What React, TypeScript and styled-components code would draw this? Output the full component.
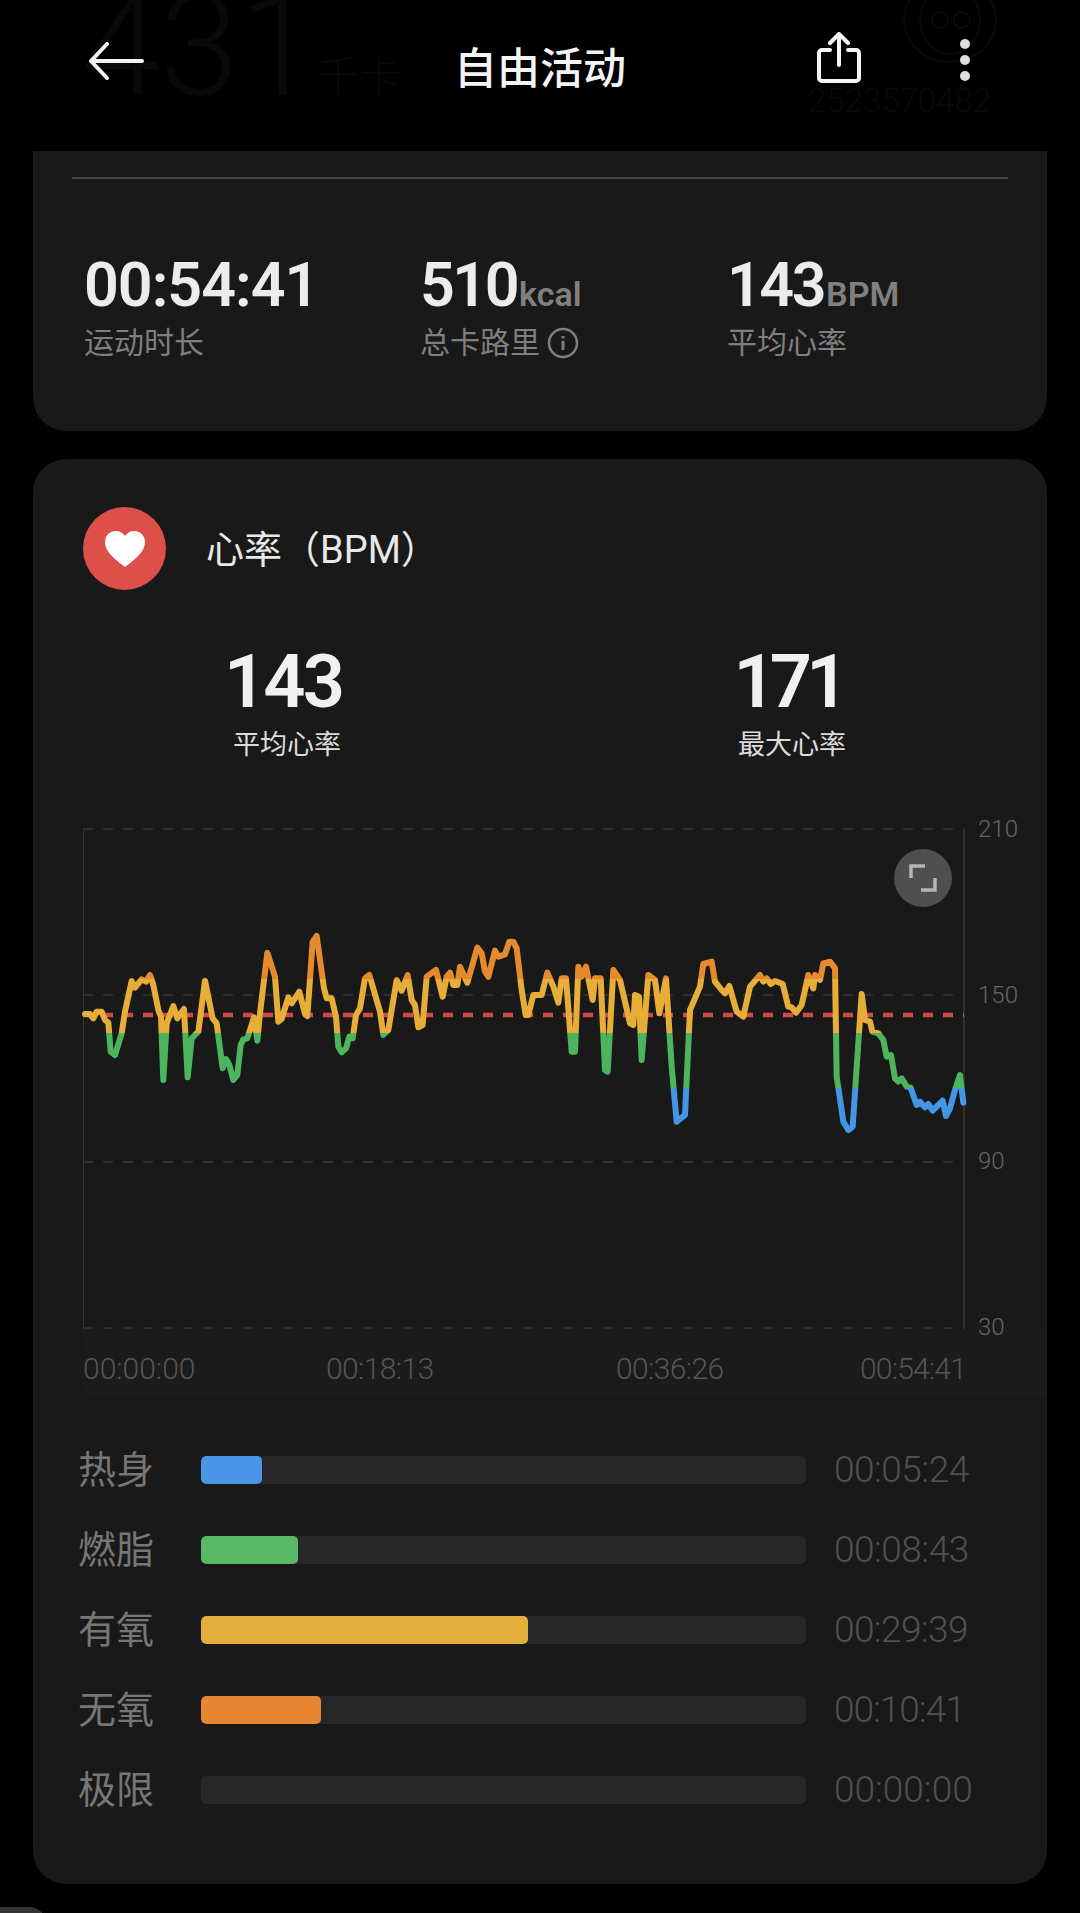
import { createGlobalStyle, styled } from "styled-components";

const GlobalStyle = createGlobalStyle`
	html, body {
		margin: 0;
		padding: 0;
		background: #000;
	}

	body {
		font-family: Roboto, "Noto Sans CJK SC", sans-serif;
	}
`;

const Page = styled.div`
	position: relative;
	width: 1080px;
	height: 1913px;
	overflow: hidden;
	background: #000;
`;

const Header = styled.header`
	position: relative;
	height: 151px;
	box-sizing: border-box;
	display: grid;
	grid-template-columns: 1fr auto 1fr;
	align-items: start;
`;

const Ghost = styled.span<{ $left: number; $top: number; $size: number }>`
	position: absolute;
	left: ${(p) => p.$left}px;
	top: ${(p) => p.$top}px;
	font-size: ${(p) => p.$size}px;
	font-weight: 300;
	line-height: 1;
	color: #090909;
`;

const GhostLogo = styled.svg`
	position: absolute;
	left: 900px;
	top: -10px;
`;

const BackButton = styled.div`
	position: relative;
	padding: 42px 0 0 88px;
	svg {
		display: block;
	}
`;

const HeaderActions = styled.div`
	position: relative;
	display: flex;
	justify-content: flex-end;
	gap: 98px;
	padding-right: 109px;
`;

const ShareButton = styled.div`
	padding-top: 32px;
	svg {
		display: block;
	}
`;

const MoreButton = styled.div`
	padding-top: 38px;
	svg {
		display: block;
	}
`;

const Title = styled.h1`
	position: relative;
	margin: 47px 0 0;
	font-size: 43px;
	font-weight: 500;
	line-height: 44px;
	color: #f4f4f4;
`;

const Card = styled.section<{ $flatTop?: boolean }>`
	margin: 0 33px;
	background: #191919;
	border-radius: ${(p) => (p.$flatTop ? "0 0 33px 33px" : "33px")};
`;

const SummaryCard = styled(Card)`
	height: 280px;
	padding: 26px 39px 0;
	box-sizing: border-box;
`;

const Divider = styled.hr`
	margin: 0;
	border: 0;
	height: 2px;
	background: #444;
`;

const SummaryRow = styled.div`
	display: grid;
	grid-template-columns: 336px 307px auto;
	margin: 80px 0 0 12px;
`;

const SummaryValue = styled.div<{ $spacing: number }>`
	display: flex;
	align-items: baseline;
	height: 52px;
	font-size: 61px;
	font-weight: 600;
	line-height: 52px;
	letter-spacing: ${(p) => p.$spacing}px;
	color: #ececec;
`;

const Unit = styled.span`
	margin-left: 2px;
	font-size: 34px;
	font-weight: 600;
	letter-spacing: 0;
	color: #808080;
`;

const SummaryLabel = styled.div`
	display: flex;
	align-items: center;
	gap: 7px;
	height: 34px;
	margin-top: 15px;
	font-size: 30px;
	line-height: 34px;
	color: #7f7f7f;
`;

const HeartCard = styled(Card)`
	margin-top: 28px;
	height: 1425px;
	padding: 48px 0 0 50px;
	box-sizing: border-box;
`;

const HeartHeader = styled.div`
	display: flex;
	align-items: center;
	gap: 40px;
`;

const HeartBadge = styled.div`
	width: 83px;
	height: 83px;
	border-radius: 50%;
	background: #dd4f49;
	display: flex;
	align-items: center;
	justify-content: center;
`;

const HeartTitle = styled.h2`
	margin: 0 0 4px;
	font-size: 38px;
	font-weight: 400;
	color: #e8e8e8;
`;

const HeartStats = styled.div`
	display: grid;
	grid-template-columns: 400px 400px;
	column-gap: 105px;
	margin-top: 58px;
`;

const HeartStat = styled.div`
	text-align: center;
`;

const HeartValue = styled.div<{ $spacing: number }>`
	font-size: 74px;
	font-weight: 600;
	line-height: 68px;
	letter-spacing: ${(p) => p.$spacing}px;
	color: #f0f0f0;
`;

const HeartLabel = styled.div`
	margin-top: 12px;
	padding-left: 8px;
	font-size: 27px;
	line-height: 34px;
	color: #dcdcdc;
`;

const ChartRow = styled.div`
	position: relative;
	display: flex;
	height: 506px;
	margin-top: 61px;
`;

const ChartSvg = styled.svg`
	display: block;
	overflow: visible;
`;

const YAxis = styled.div`
	display: flex;
	flex-direction: column;
	justify-content: space-between;
	height: 526px;
	margin: -8px 0 0 14px;
`;

const YTick = styled.span`
	font-size: 24px;
	font-weight: 300;
	line-height: 28px;
	color: #666;
`;

const ExpandButton = styled.div`
	position: absolute;
	left: 811px;
	top: 26px;
	width: 58px;
	height: 58px;
	border-radius: 50%;
	background: #4f4f4f;
	display: flex;
	align-items: center;
	justify-content: center;
`;

const XAxis = styled.div`
	display: grid;
	grid-template-columns: 243px 290px 244px auto;
	align-items: center;
	height: 66px;
	padding-top: 12px;
	box-sizing: border-box;
	background: #1b1b1b;
	font-size: 30px;
	font-weight: 300;
	color: #555;
`;

const XTick = styled.span<{ $spacing?: number }>`
	letter-spacing: ${(p) => p.$spacing ?? 0}px;
`;

const Zones = styled.div`
	display: flex;
	flex-direction: column;
	gap: 40px;
	margin: 53px 0 0 -5px;
`;

const ZoneRow = styled.div`
	display: grid;
	grid-template-columns: 123px 605px auto;
	align-items: center;
	height: 40px;
`;

const ZoneName = styled.span`
	font-size: 38px;
	line-height: 40px;
	color: #767676;
`;

const ZoneTrack = styled.div`
	height: 28px;
	border-radius: 5px;
	background: #272727;
	overflow: hidden;
`;

const ZoneFill = styled.div<{ $color: string; $width: number }>`
	width: ${(p) => p.$width}px;
	height: 100%;
	border-radius: 5px;
	background: ${(p) => p.$color};
`;

const ZoneTime = styled.span<{ $spacing: number }>`
	margin-left: 28px;
	font-size: 37px;
	font-weight: 300;
	letter-spacing: ${(p) => p.$spacing}px;
	color: #505050;
`;

const NextCardEdge = styled.div`
	position: absolute;
	left: -2px;
	top: 1907px;
	width: 49px;
	height: 30px;
	border-radius: 0 18px 0 0;
	background: #333;
`;

// traced from the chart, x/y in 3x crop pixels
const left: [number, number][] = [
	[75, 582], [90, 582], [100, 595], [110, 575], [125, 575], [135, 600], [145, 608], [152, 695], [165, 705], [185, 640],
	[195, 575], [215, 483], [225, 503], [245, 478], [258, 485], [270, 465], [280, 495], [295, 570], [303, 590], [310, 780],
	[320, 610], [340, 558], [352, 595], [372, 567], [383, 772], [395, 655], [415, 635], [435, 482], [458, 595], [470, 610],
	[488, 745], [498, 717], [508, 735], [520, 780], [532, 765], [542, 675], [550, 658], [562, 655], [582, 592], [592, 662],
	[600, 580], [622, 398], [645, 470], [655, 605], [665, 597], [685, 532], [695, 550], [718, 515], [735, 582], [742, 588],
	[758, 365], [770, 348], [792, 505], [800, 535], [815, 535], [828, 590], [835, 680], [845, 697], [858, 685], [868, 650],
	[878, 655], [888, 585], [900, 565], [915, 475], [928, 465], [960, 575], [970, 645], [985, 630], [1010, 480], [1025, 512],
	[1043, 465], [1055, 540], [1065, 555], [1075, 622], [1088, 615], [1100, 470], [1128, 450], [1148, 530], [1160, 470], [1170, 458],
	[1180, 495], [1192, 495], [1200, 440], [1222, 488], [1252, 383], [1265, 400], [1275, 455], [1285, 470], [1305, 392], [1315, 410],
	[1335, 403], [1348, 365], [1360, 365], [1370, 385], [1385, 510], [1397, 585], [1405, 585], [1420, 525], [1445, 525], [1462, 458],
];

const right: [number, number][] = [
	[40, 500], [55, 548], [65, 475], [78, 475], [95, 695], [105, 695], [115, 440], [125, 470], [138, 440], [158, 540],
	[165, 475], [182, 475], [195, 750], [203, 755], [220, 450], [240, 480], [270, 610], [280, 615], [285, 525], [297, 530],
	[305, 720], [325, 465], [345, 480], [358, 580], [378, 475], [395, 740], [410, 905], [435, 885], [450, 570], [480, 500],
	[490, 432], [515, 425], [525, 485], [545, 510], [555, 520], [568, 498], [590, 575], [610, 590], [630, 500], [660, 465],
	[670, 485], [680, 475], [692, 492], [705, 483], [728, 492], [745, 560], [755, 562], [768, 578], [785, 555], [805, 465],
	[820, 505], [825, 465], [840, 480], [850, 430], [870, 425], [885, 445], [890, 770], [910, 905], [925, 930], [938, 920],
	[965, 522], [975, 600], [990, 605], [997, 635], [1015, 640], [1030, 660], [1040, 710], [1053, 705], [1065, 775], [1075, 785],
	[1085, 775], [1100, 800], [1112, 803], [1130, 855], [1140, 845], [1155, 862], [1165, 852], [1178, 872], [1208, 842], [1218, 888],
	[1230, 865], [1245, 810], [1260, 765], [1270, 848],
];

const points = [
	...left.map(([x, y]) => `${x / 3 - 23},${y / 3 - 3}`),
	...right.map(([x, y]) => `${x / 3 + 457},${y / 3 - 3}`),
].join(" ");

const zones = [
	{ name: "热身", time: "00:05:24", color: "#4a95e6", width: 61, spacing: -0.5 },
	{ name: "燃脂", time: "00:08:43", color: "#58b863", width: 97, spacing: -0.5 },
	{ name: "有氧", time: "00:29:39", color: "#e4ae3c", width: 327, spacing: -0.6 },
	{ name: "无氧", time: "00:10:41", color: "#e68632", width: 120, spacing: -1 },
	{ name: "极限", time: "00:00:00", color: "transparent", width: 0, spacing: 0 },
];

function HeartChart() {
	return (
		<ChartSvg width={881} height={506} viewBox="0 0 881 506">
			<defs>
				<linearGradient id="zones" gradientUnits="userSpaceOnUse" x1="0" y1="0" x2="0" y2="506">
					<stop offset={156 / 506} stopColor="#e68a2e" />
					<stop offset={156 / 506} stopColor="#e6ae38" />
					<stop offset={210 / 506} stopColor="#e6ae38" />
					<stop offset={210 / 506} stopColor="#4cb45c" />
					<stop offset={265 / 506} stopColor="#4cb45c" />
					<stop offset={265 / 506} stopColor="#4396e4" />
				</linearGradient>
			</defs>
			<line x1="0.5" y1="6" x2="0.5" y2="506" stroke="#333" strokeWidth="1" />
			<line x1="881" y1="6" x2="881" y2="506" stroke="#444" strokeWidth="1" />
			{[6, 172, 339, 505].map((y) => (
				<line key={y} x1="0" y1={y} x2="881" y2={y} stroke="#2e2e2e" strokeWidth="2" strokeDasharray="10 10" />
			))}
			<line x1="0" y1="192" x2="881" y2="192" stroke="#cf4a44" strokeWidth="4.5" strokeDasharray="10 10" />
			<polyline points={points} fill="none" stroke="url(#zones)" strokeWidth="6" strokeLinejoin="round" strokeLinecap="round" />
		</ChartSvg>
	);
}

export default function App() {
	return (
		<Page>
			<GlobalStyle />
			<Header>
				<Ghost $left={81} $top={-24} $size={142}>431</Ghost>
				<Ghost $left={317} $top={56} $size={42}>千卡</Ghost>
				<Ghost $left={808} $top={84} $size={33}>2523570482</Ghost>
				<GhostLogo width="100" height="76" viewBox="0 0 100 76" fill="none" stroke="#0a0a0a" strokeWidth="2">
					<ellipse cx="50" cy="30" rx="46" ry="42" />
					<ellipse cx="50" cy="30" rx="30" ry="34" />
					<circle cx="40" cy="30" r="8" />
					<circle cx="62" cy="30" r="8" />
				</GhostLogo>
				<BackButton>
					<svg width="56" height="38" viewBox="0 0 56 38" fill="none" stroke="#f4f4f4" strokeWidth="4" strokeLinecap="round" strokeLinejoin="round">
						<path d="M54 19H3M19 2 3 19l16 17" />
					</svg>
				</BackButton>
				<Title>自由活动</Title>
				<HeaderActions>
					<ShareButton>
						<svg width="44" height="52" viewBox="0 0 44 52" fill="none" stroke="#f6f6f6" strokeWidth="4" strokeLinecap="round" strokeLinejoin="round">
							<path d="M22 33V3M13 11l9-9 9 9" />
							<path d="M13 18H5a3 3 0 0 0-3 3v25a3 3 0 0 0 3 3h34a3 3 0 0 0 3-3V21a3 3 0 0 0-3-3h-8" />
						</svg>
					</ShareButton>
					<MoreButton>
						<svg width="12" height="44" viewBox="0 0 12 44" fill="#dedede">
							<circle cx="6" cy="6" r="5" />
							<circle cx="6" cy="22" r="5" />
							<circle cx="6" cy="38" r="5" />
						</svg>
					</MoreButton>
				</HeaderActions>
			</Header>

			<SummaryCard $flatTop>
				<Divider />
				<SummaryRow>
					<div>
						<SummaryValue $spacing={-1}>00:54:41</SummaryValue>
						<SummaryLabel>运动时长</SummaryLabel>
					</div>
					<div>
						<SummaryValue $spacing={-2.5}>510<Unit>kcal</Unit></SummaryValue>
						<SummaryLabel>
							总卡路里
							<svg width="32" height="32" viewBox="0 0 32 32" fill="none" stroke="#7f7f7f" strokeWidth="2.500">
								<circle cx="16" cy="16" r="14" />
								<path d="M16 14v9M16 9v2.500" strokeWidth="3" />
							</svg>
						</SummaryLabel>
					</div>
					<div>
						<SummaryValue $spacing={-2.5}>143<Unit>BPM</Unit></SummaryValue>
						<SummaryLabel>平均心率</SummaryLabel>
					</div>
				</SummaryRow>
			</SummaryCard>

			<HeartCard>
				<HeartHeader>
					<HeartBadge>
						<svg width="40" height="36" viewBox="0 0 40 36" fill="#fff">
							<path d="M20 36C8 27 0 20 0 11 0 4.500 5 0 11 0c4 0 7 2 9 5 2-3 5-5 9-5 6 0 11 4.500 11 11 0 9-8 16-20 25z" />
						</svg>
					</HeartBadge>
					<HeartTitle>心率（BPM）</HeartTitle>
				</HeartHeader>

				<HeartStats>
					<HeartStat>
						<HeartValue $spacing={-3}>143</HeartValue>
						<HeartLabel>平均心率</HeartLabel>
					</HeartStat>
					<HeartStat>
						<HeartValue $spacing={-6}>171</HeartValue>
						<HeartLabel>最大心率</HeartLabel>
					</HeartStat>
				</HeartStats>

				<ChartRow>
					<HeartChart />
					<YAxis>
						<YTick>210</YTick>
						<YTick>150</YTick>
						<YTick>90</YTick>
						<YTick>30</YTick>
					</YAxis>
					<ExpandButton>
						<svg width="28" height="28" viewBox="0 0 28 28" fill="none" stroke="#b5b5b5" strokeWidth="3.500">
							<path d="M2 14V2h14M26 14v12H12" />
						</svg>
					</ExpandButton>
				</ChartRow>

				<XAxis>
					<XTick>00:00:00</XTick>
					<XTick $spacing={-0.6}>00:18:13</XTick>
					<XTick $spacing={-0.6}>00:36:26</XTick>
					<XTick $spacing={-0.8}>00:54:41</XTick>
				</XAxis>

				<Zones>
					{zones.map((z) => (
						<ZoneRow key={z.name}>
							<ZoneName>{z.name}</ZoneName>
							<ZoneTrack>
								<ZoneFill $color={z.color} $width={z.width} />
							</ZoneTrack>
							<ZoneTime $spacing={z.spacing}>{z.time}</ZoneTime>
						</ZoneRow>
					))}
				</Zones>
			</HeartCard>

			<NextCardEdge />
		</Page>
	);
}
